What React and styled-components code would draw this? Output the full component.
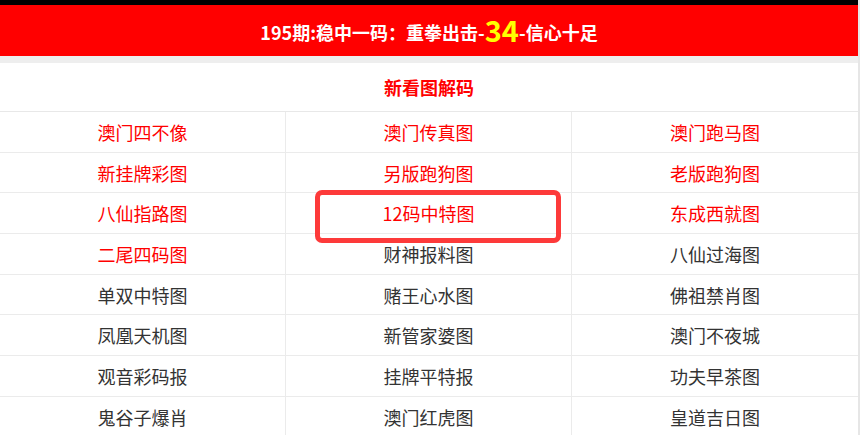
import React from 'react';
import styled, { createGlobalStyle } from 'styled-components';

const Global = createGlobalStyle`
  body {
    margin: 0;
    background: #fff;
    font-family: "Microsoft YaHei", "Noto Sans CJK SC", "Noto Sans", sans-serif;
  }
`

const Page = styled.div`
  width: 858px;
  border-right: 2px solid #e6e6e6;
  position: relative;
`

const TopBar = styled.div`
  height: 5px;
  background: #000;
`

const Banner = styled.div`
  height: 51px;
  background: #ff0000;
  color: #fff;
  font-weight: bold;
  font-size: 18px;
  display: flex;
  align-items: center;
  justify-content: center;
  padding-top: 2px;
  box-sizing: border-box;
`

const Big = styled.span`
  color: #ffff00;
  font-size: 29px;
  line-height: 1;
  margin-top: -4px;
`

const Gap = styled.div`
  height: 7px;
  background: #eeeeee;
`

const Heading = styled.div`
  height: 49px;
  display: flex;
  align-items: center;
  justify-content: center;
  color: #ff0000;
  font-weight: bold;
  font-size: 18px;
  border-bottom: 1px solid #e8e8e8;
  box-sizing: border-box;
`

const Grid = styled.div`
  display: grid;
  grid-template-columns: repeat(3, 1fr);
`

const Cell = styled.a`
  height: 40.7px;
  box-sizing: border-box;
  border-bottom: 1px solid #ebebeb;
  border-right: ${p => (p.last ? 'none' : '1px solid #ebebeb')};
  display: flex;
  align-items: center;
  justify-content: center;
  font-size: 18px;
  color: ${p => (p.hot ? '#ff0000' : '#333')};
  text-decoration: none;
`

const Mark = styled.div`
  position: absolute;
  left: 315px;
  top: 190px;
  width: 246px;
  height: 53px;
  box-sizing: border-box;
  border: 5px solid #fd3a3a;
  border-radius: 7px;
  pointer-events: none;
`

const rows = [
  ['澳门四不像', '澳门传真图', '澳门跑马图'],
  ['新挂牌彩图', '另版跑狗图', '老版跑狗图'],
  ['八仙指路图', '12码中特图', '东成西就图'],
  ['二尾四码图', '财神报料图', '八仙过海图'],
  ['单双中特图', '赌王心水图', '佛祖禁肖图'],
  ['凤凰天机图', '新管家婆图', '澳门不夜城'],
  ['观音彩码报', '挂牌平特报', '功夫早茶图'],
  ['鬼谷子爆肖', '澳门红虎图', '皇道吉日图'],
];

const isHot = (r, c) => r < 3 || (r === 3 && c === 0);

export default function App() {
  return (
    <Page>
      <Global />
      <TopBar />
      <Banner>
        195期:稳中一码：重拳出击-<Big>34</Big>-信心十足
      </Banner>
      <Gap />
      <Heading>新看图解码</Heading>
      <Grid>
        {rows.map((row, r) =>
          row.map((name, c) => (
            <Cell key={r + '-' + c} href="#" hot={isHot(r, c)} last={c === 2}>
              {name}
            </Cell>
          ))
        )}
      </Grid>
      <Mark />
    </Page>
  );
}
